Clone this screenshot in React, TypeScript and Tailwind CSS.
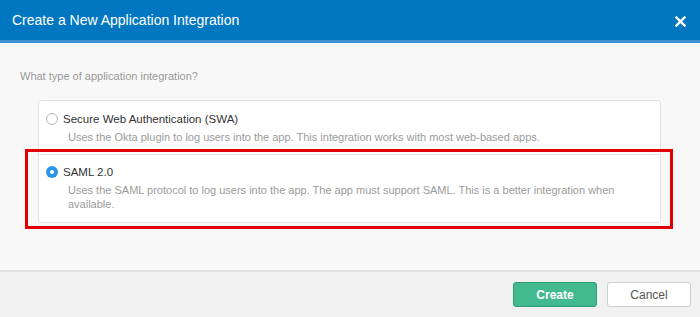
import React from "react";

function Radio({ checked }: { checked?: boolean }) {
  if (checked) {
    return (
      <span className="flex h-[12px] w-[12px] shrink-0 items-center justify-center rounded-full bg-[#2b95e9]">
        <span className="h-[4px] w-[4px] rounded-full bg-white" />
      </span>
    );
  }
  return <span className="h-[12px] w-[12px] shrink-0 rounded-full border border-[#b5b5b5] bg-white" />;
}

export default function App() {
  return (
    <div className="flex h-[317px] w-[700px] flex-col bg-[#f8f8f8] font-['Liberation_Sans',Arial,sans-serif]">
      <div className="flex h-[40px] items-center justify-between bg-[#0277c1] pl-[12px] pr-[14px]">
        <div className="text-[14px] text-white">Create a New Application Integration</div>
        <svg width="11" height="11" viewBox="0 0 11 11" className="mt-[2px]">
          <path d="M1.5 1.5 L9.5 9.5 M9.5 1.5 L1.5 9.5" stroke="white" strokeWidth="2.4" strokeLinecap="square" />
        </svg>
      </div>
      <div className="h-[3px] bg-[#3f93d4]" />
      <div className="flex-1 px-[20px] pt-[26px]">
        <div className="text-[11px] leading-[14px] text-[#999999]">What type of application integration?</div>
        <div className="mt-[17px] ml-[18px] mr-[19px] rounded-[3px] border border-[#e3e3e3] bg-white">
          <div className="px-[7px] pb-[10px] pt-[11px]">
            <div className="flex items-center gap-[5px]">
              <Radio />
              <span className="text-[11.5px] leading-[14px] text-[#333333]">Secure Web Authentication (SWA)</span>
            </div>
            <div className="mt-[4px] pl-[22px] text-[11px] leading-[14px] text-[#9b9b9b]">
              Uses the Okta plugin to log users into the app. This integration works with most web-based apps.
            </div>
          </div>
          <div className="relative border-t border-[#e3e3e3] px-[7px] pb-[11px] pt-[10px]">
            <div className="pointer-events-none absolute -bottom-[7px] -left-[14px] -right-[13px] -top-[6px] border-[3px] border-[#e00000]" />
            <div className="flex items-center gap-[5px]">
              <Radio checked />
              <span className="text-[11.5px] leading-[14px] text-[#333333]">SAML 2.0</span>
            </div>
            <div className="mt-[4px] pl-[22px] pr-[10px] text-[11px] leading-[14px] text-[#9b9b9b]">
              Uses the SAML protocol to log users into the app. The app must support SAML. This is a better integration when available.
            </div>
          </div>
        </div>
      </div>
      <div className="flex h-[47px] items-center justify-end gap-[10px] border-t-2 border-[#e2e2e2] bg-[#f1f1f1] pr-[9px]">
        <button className="h-[25px] w-[84px] rounded-[3px] border border-[#2f9e77] bg-[#43b98f] text-[12px] font-bold text-white">Create</button>
        <button className="h-[25px] w-[84px] rounded-[3px] border border-[#cfcfcf] bg-white text-[12px] text-[#555555]">Cancel</button>
      </div>
    </div>
  );
}
